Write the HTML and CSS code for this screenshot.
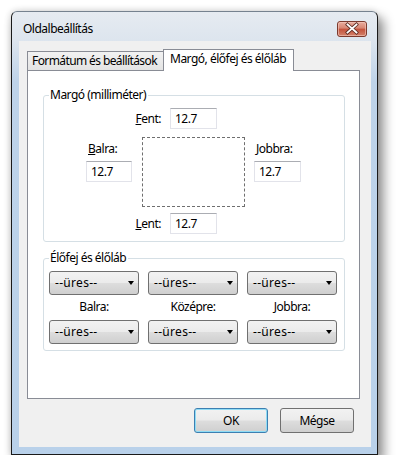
FILE: index.html
```html
<!DOCTYPE html>
<html lang="hu">
<head>
    <meta charset="UTF-8">
    <title>Oldalbeállítás</title>
    <link rel="stylesheet" href="styles.css">
</head>
<body>

    <div class="window">
        <div class="titlebar">
            <span class="title">Oldalbeállítás</span>
            <svg class="close" width="30" height="16" viewBox="0 0 30 16">
                <defs>
                    <linearGradient id="closeGrad" x1="0" y1="0" x2="0" y2="1">
                        <stop offset="0" stop-color="#eab0a2"/>
                        <stop offset="0.45" stop-color="#d78471"/>
                        <stop offset="0.5" stop-color="#c4513b"/>
                        <stop offset="1" stop-color="#d4866f"/>
                    </linearGradient>
                </defs>
                <rect x="0.5" y="0.5" width="29" height="15" rx="2.5" fill="url(#closeGrad)" stroke="#7b3a2e"/>
                <rect x="1.5" y="1.5" width="27" height="13" rx="1.5" fill="none" stroke="#f3c9bf" stroke-opacity="0.6"/>
                <path d="M10.5 3.5 L19.5 11.5 M19.5 3.5 L10.5 11.5" stroke="#5b2a21" stroke-width="3.4" stroke-linecap="square"/>
                <path d="M10.5 3.5 L19.5 11.5 M19.5 3.5 L10.5 11.5" stroke="#ffffff" stroke-width="1.8" stroke-linecap="square"/>
            </svg>
        </div>

        <div class="client">
            <div class="tabs">
                <div class="tab">Formátum és beállítások</div>
                <div class="tab active">Margó, élőfej és élőláb</div>
            </div>

            <div class="panel">
                <fieldset class="group margins">
                    <legend>Margó (milliméter)</legend>
                    <div class="margin-grid">
                        <label class="top-label"><u>F</u>ent:</label>
                        <input class="field top-field" type="text" value="12.7">

                        <div class="side left-side">
                            <label><u>B</u>alra:</label>
                            <input class="field" type="text" value="12.7">
                        </div>
                        <div class="page-box"></div>
                        <div class="side right-side">
                            <label><u>J</u>obbra:</label>
                            <input class="field" type="text" value="12.7">
                        </div>

                        <label class="bottom-label"><u>L</u>ent:</label>
                        <input class="field bottom-field" type="text" value="12.7">
                    </div>
                </fieldset>

                <fieldset class="group headers">
                    <legend>Élőfej és élőláb</legend>
                    <div class="header-grid">
                        <div class="dropdown"><span>--üres--</span><span class="arrow"></span></div>
                        <div class="dropdown"><span>--üres--</span><span class="arrow"></span></div>
                        <div class="dropdown"><span>--üres--</span><span class="arrow"></span></div>

                        <div class="caption">Balra:</div>
                        <div class="caption">Középre:</div>
                        <div class="caption">Jobbra:</div>

                        <div class="dropdown"><span>--üres--</span><span class="arrow"></span></div>
                        <div class="dropdown"><span>--üres--</span><span class="arrow"></span></div>
                        <div class="dropdown"><span>--üres--</span><span class="arrow"></span></div>
                    </div>
                </fieldset>
            </div>

            <div class="buttons">
                <button class="btn default" type="button">OK</button>
                <button class="btn" type="button">Mégse</button>
            </div>
        </div>
    </div>

</body>
</html>
```

FILE: styles.css
```css
body {
    margin: 0;
    background: #ffffff;
    font-family: "Noto Sans", "Open Sans", sans-serif;
    font-size: 12px;
    line-height: 16px;
    letter-spacing: -0.5px;
    color: #000000;
}

/* window frame */
.window {
    margin: 11px 0 0 11px;
    width: 367px;
    height: 444px;
    box-sizing: border-box;
    border: 1px solid #1a1a1a;
    border-top-color: #76828f;
    border-radius: 6px 6px 0 0;
    background: linear-gradient(#e6ebf1 0, #dde5ee 28px, #bed3e9 70px, #b9d1ea 100%);
    box-shadow: 5px 7px 11px 1px rgba(0, 0, 0, 0.42), -1px -1px 6px rgba(0, 0, 0, 0.12);
    display: flex;
    flex-direction: column;
}
.titlebar {
    height: 29px;
    box-sizing: border-box;
    padding: 9px 10px 0 11px;
    display: flex;
    align-items: flex-start;
}
.title {
    flex: 1;
}
.close {
    display: block;
}
.client {
    flex: 1;
    margin: 0 6px 7px 7px;
    padding: 8px 11px 0 8px;
    background: #f0f0f0;
}

/* tabs */
.tabs {
    display: flex;
    align-items: flex-end;
    height: 21px;
}
.tab {
    width: 137px;
    height: 19px;
    box-sizing: border-box;
    padding-left: 4px;
    border: 1px solid #898c95;
    border-bottom: none;
    background: linear-gradient(#f2f2f2, #e3e3e3);
    line-height: 18px;
    letter-spacing: -0.6px;
}
.tab.active {
    position: relative;
    z-index: 1;
    width: 131px;
    height: 22px;
    margin: 0 0 -1px -1px;
    padding-left: 6px;
    background: #ffffff;
    line-height: 17px;
    letter-spacing: -0.5px;
}
.panel {
    height: 329px;
    box-sizing: border-box;
    border: 1px solid #898c95;
    background: #ffffff;
    padding: 16px 14px 0 15px;
}

/* group boxes */
.group {
    margin: 0;
    padding: 5px 6px 7px 5px;
    border: 1px solid #d5dfe5;
    border-radius: 3px;
}
.group legend {
    padding: 0 2px 0 1px;
    line-height: 16px;
}
.headers {
    margin-top: 8px;
    padding-bottom: 6px;
}

.margin-grid {
    margin-left: 37px;
    display: grid;
    grid-template-columns: 46px 10px 28px 47px 28px 9px 47px;
    grid-template-rows: 21px 8px 70px 6px 21px;
}
.top-label, .bottom-label {
    grid-column: 1 / 4;
    justify-self: end;
    align-self: center;
    margin-right: 9px;
}
.top-label {
    grid-row: 1;
}
.bottom-label {
    grid-row: 5;
}
.top-field {
    grid-column: 4;
    grid-row: 1;
}
.bottom-field {
    grid-column: 4;
    grid-row: 5;
}
.side {
    grid-row: 3;
    display: flex;
    flex-direction: column;
    gap: 4px;
    padding-top: 4px;
}
.side label {
    padding-left: 2px;
}
.left-side {
    grid-column: 1;
}
.right-side {
    grid-column: 7;
}
.page-box {
    grid-column: 3 / 6;
    grid-row: 3;
    border: 1px dashed #6f6f6f;
}
.field {
    width: 100%;
    height: 21px;
    box-sizing: border-box;
    margin: 0;
    padding: 0 4px;
    border: 1px solid #e2e3ea;
    border-top-color: #abadb3;
    font: inherit;
    letter-spacing: inherit;
    color: #000000;
    background: #ffffff;
}

.header-grid {
    display: grid;
    grid-template-columns: repeat(3, 90px);
    grid-template-rows: 24px 25px 24px;
    column-gap: 9px;
}
.dropdown {
    display: flex;
    align-items: center;
    justify-content: space-between;
    padding: 0 4px 0 5px;
    border: 1px solid #707070;
    border-radius: 3px;
    background: linear-gradient(#f2f2f2 0%, #ebebeb 48%, #dddddd 52%, #cfcfcf 100%);
    letter-spacing: 0.3px;
}
.arrow {
    width: 0;
    height: 0;
    border-left: 3.5px solid transparent;
    border-right: 3.5px solid transparent;
    border-top: 4px solid #000000;
}
.caption {
    text-align: center;
    padding-top: 4px;
}

/* dialog buttons */
.buttons {
    display: flex;
    justify-content: flex-end;
    gap: 12px;
    margin-top: 9px;
    padding-right: 6px;
}
.btn {
    width: 74px;
    height: 25px;
    border: 1px solid #707070;
    border-radius: 3px;
    background: linear-gradient(#f2f2f2 0%, #ebebeb 48%, #dddddd 52%, #cfcfcf 100%);
    font: inherit;
    letter-spacing: inherit;
    color: #000000;
}
.btn.default {
    border-color: #3c7fb1;
    box-shadow: inset 0 0 0 1px #8fdcf5;
}
```
